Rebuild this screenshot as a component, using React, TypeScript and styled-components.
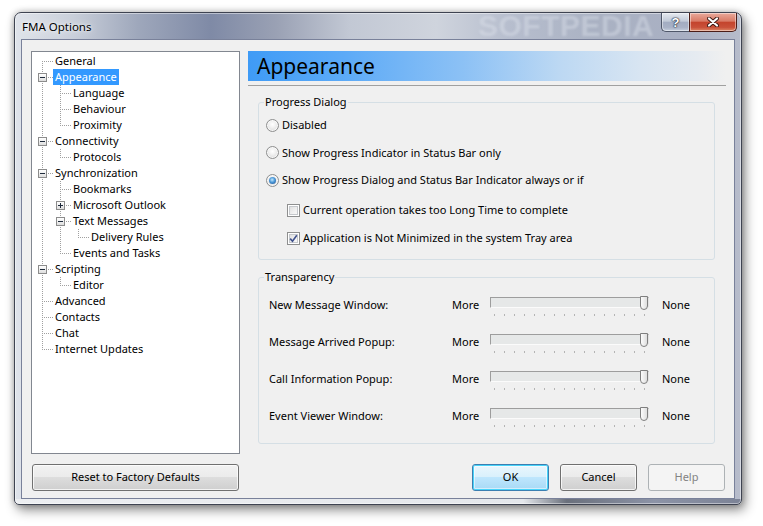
import React from "react";
import styled, { createGlobalStyle, css } from "styled-components";

const FONT = `"Noto Sans", "Segoe UI", sans-serif`;

const GlobalStyle = createGlobalStyle`
  html, body { margin: 0; padding: 0; background: #ffffff; }
  body { font-family: ${FONT}; font-size: 11px; color: #000; }
  * { box-sizing: border-box; }
`;

const Page = styled.div`
  width: 763px;
  height: 526px;
  overflow: hidden;
  padding: 12px 0 0 14px;
`;

const Window = styled.div`
  width: 728px;
  height: 493px;
  border: 1px solid #3e4351;
  border-radius: 7px 7px 5px 5px;
  padding: 0 6px 5px 6px;
  display: flex;
  flex-direction: column;
  background:
    linear-gradient(to right, #eceef1 0%, #e4e7eb 70%, #6a707c 76%, #8c93a6 88%, #7c8396 100%) bottom / 100% 5px no-repeat,
    linear-gradient(to right, #dfe3ea 0%, #c9cfda 8%, #9ea7bb 17%, #7f8aa6 27%, #9aa1b4 36%, #c2c8d4 46%, #cfd4dd 58%, #b7bece 68%, #aab2c3 80%, #a9b0c3 92%, #b7bccb 100%);
  box-shadow: inset 0 0 0 1px rgba(255, 255, 255, 0.45), 3px 5px 12px rgba(0, 0, 0, 0.45), 0 0 6px rgba(0, 0, 0, 0.25);
`;

const TitleBar = styled.div`
  height: 26px;
  flex: none;
  display: flex;
  align-items: flex-start;
  justify-content: space-between;
  position: relative;
`;

const Title = styled.span`
  padding-left: 1px;
  line-height: 27px;
  font-size: 11.5px;
  color: #000;
  text-shadow: 0 0 8px rgba(255, 255, 255, 0.9), 0 0 3px rgba(255, 255, 255, 0.9);
`;

const Watermark = styled.span`
  position: absolute;
  left: 457px;
  top: -4px;
  font-family: "Liberation Sans", sans-serif;
  font-weight: bold;
  font-size: 30px;
  letter-spacing: 0.5px;
  color: rgba(222, 227, 236, 0.42);
  filter: blur(0.8px);
  pointer-events: none;
`;

const CaptionGroup = styled.div`
  display: flex;
  margin-right: -2px;
  position: relative;
`;

const CaptionButton = styled.div<{ $close?: boolean }>`
  height: 19px;
  width: ${(p) => (p.$close ? 48 : 28)}px;
  display: flex;
  align-items: center;
  justify-content: center;
  border: 1px solid ${(p) => (p.$close ? "#4b1d17" : "#4f5769")};
  border-top: none;
  box-shadow: inset 0 0 0 1px rgba(255, 255, 255, 0.45);
  ${(p) =>
    p.$close
      ? css`
          border-radius: 0 0 5px 0;
          background: linear-gradient(#e9a99b 0%, #d97b67 45%, #c4442d 52%, #c9513a 80%, #de8a68 100%);
        `
      : css`
          border-right: none;
          border-radius: 0 0 0 5px;
          background: linear-gradient(#e6eaf0 0%, #c2cad8 45%, #a3adc2 52%, #a9b2c6 80%, #c6d0de 100%);
        `}
`;

const HelpGlyph = styled.span`
  font-family: "Liberation Sans", sans-serif;
  font-weight: bold;
  font-size: 13px;
  line-height: 1;
  color: #ffffff;
  text-shadow: 0 0 1px #1e2738, 0 0 1px #1e2738, 0 0 2px #1e2738;
`;

const Client = styled.div`
  flex: 1;
  border: 1px solid #79819a;
  background: #f0f0f0;
  display: grid;
  grid-template-columns: 209px 1fr;
  grid-template-rows: 403px 27px;
  column-gap: 8px;
  row-gap: 10px;
  padding: 11px 8px 7px 9px;
`;

/* ---------- Tree ---------- */

const Tree = styled.div`
  border: 1px solid #828790;
  background: #ffffff;
  padding: 1px 0 0 1px;
  display: flex;
  flex-direction: column;
`;

const TreeRow = styled.div`
  height: 16px;
  display: flex;
  align-items: stretch;
`;

type Guide = "pipe" | "blank" | "tee" | "elbow" | "first";

const dotV = css`
  content: "";
  position: absolute;
  left: 9px;
  width: 1px;
  background-image: linear-gradient(to bottom, #a0a0a0 50%, transparent 50%);
  background-size: 1px 2px;
`;
const dotH = css`
  content: "";
  position: absolute;
  top: 8px;
  left: 9px;
  right: -2px;
  height: 1px;
  background-image: linear-gradient(to right, #a0a0a0 50%, transparent 50%);
  background-size: 2px 1px;
`;

const GuideCell = styled.span<{ $kind: Guide }>`
  width: 18px;
  flex: none;
  position: relative;
  ${(p) =>
    p.$kind !== "blank" &&
    css`
      &::before {
        ${dotV};
        top: ${p.$kind === "first" ? "8px" : "0"};
        bottom: ${p.$kind === "elbow" ? "8px" : "0"};
      }
    `}
  ${(p) =>
    (p.$kind === "tee" || p.$kind === "elbow" || p.$kind === "first") &&
    css`
      &::after {
        ${dotH};
      }
    `}
`;

const Expander = styled.span<{ $plus?: boolean }>`
  position: absolute;
  left: 5px;
  top: 4px;
  width: 9px;
  height: 9px;
  border: 1px solid #8c8c8c;
  background: linear-gradient(#ffffff, #dedede);
  z-index: 1;
  &::before {
    content: "";
    position: absolute;
    left: 1px;
    top: 3px;
    width: 5px;
    height: 1px;
    background: #1f2b3c;
  }
  ${(p) =>
    p.$plus &&
    css`
      &::after {
        content: "";
        position: absolute;
        left: 3px;
        top: 1px;
        width: 1px;
        height: 5px;
        background: #1f2b3c;
      }
    `}
`;

const TreeLabel = styled.span<{ $selected?: boolean }>`
  margin-left: 2px;
  padding: 0 2px;
  line-height: 16px;
  white-space: nowrap;
  color: #000;
  ${(p) =>
    p.$selected &&
    css`
      background: #3399ff;
      color: #ffffff;
    `}
`;

/* ---------- Right side ---------- */

const RightPane = styled.div`
  display: flex;
  flex-direction: column;
`;

const Header = styled.div`
  height: 30px;
  flex: none;
  padding-left: 9px;
  font-size: 21px;
  line-height: 30px;
  color: #000;
  background: linear-gradient(to right, #3f9bf6 0%, #5caaf7 20%, #8cc1f5 45%, #bcd8f3 65%, #d8e5f2 82%, #e6ebf1 94%, #f0f0f0 100%);
`;

const Rule = styled.div`
  height: 1px;
  margin-top: 4px;
  background: #a0a0a0;
  flex: none;
`;

const Group = styled.fieldset<{ $top: number }>`
  margin: ${(p) => p.$top}px 11px 0 10px;
  padding: 0;
  border: 1px solid #d5dfe5;
  border-radius: 3px;
  min-width: 0;
`;

const Legend = styled.legend`
  margin-left: 5px;
  padding: 0 1px;
  line-height: 16px;
  font-size: 11px;
  color: #000;
`;

const GroupBody = styled.div<{ $pad: string }>`
  padding: ${(p) => p.$pad};
  display: flex;
  flex-direction: column;
`;

const OptionList = styled.div<{ $gap: number; $indent?: number; $top?: number }>`
  display: flex;
  flex-direction: column;
  gap: ${(p) => p.$gap}px;
  padding-left: ${(p) => p.$indent ?? 0}px;
  margin-top: ${(p) => p.$top ?? 0}px;
`;

const Option = styled.label`
  height: 16px;
  display: flex;
  align-items: center;
  gap: 3px;
  line-height: 16px;
  white-space: nowrap;
`;

const RadioMark = styled.span<{ $checked?: boolean }>`
  width: 13px;
  height: 13px;
  flex: none;
  border-radius: 50%;
  border: 1px solid #8e8f8f;
  position: relative;
  background: radial-gradient(circle at 50% 40%, #ffffff 0%, #f2f2f2 35%, #d2d2d2 100%);
  box-shadow: inset 0 0 0 1px rgba(255, 255, 255, 0.7);
  ${(p) =>
    p.$checked &&
    css`
      &::after {
        content: "";
        position: absolute;
        left: 2px;
        top: 2px;
        width: 7px;
        height: 7px;
        border-radius: 50%;
        background: radial-gradient(circle at 45% 40%, #c4e8fc 0%, #4b98d8 45%, #1b4a8a 100%);
      }
    `}
`;

const CheckMark = styled.span`
  width: 13px;
  height: 13px;
  flex: none;
  border: 1px solid #8e8f8f;
  background: linear-gradient(135deg, #d8d8d8 0%, #f2f2f2 60%, #fdfdfd 100%);
  box-shadow: inset 0 0 0 1px #ffffff, inset 0 0 0 2px #c5c8cc;
  display: flex;
  align-items: center;
  justify-content: center;
`;

const SliderList = styled.div`
  display: flex;
  flex-direction: column;
  gap: 17px;
`;

const SliderRow = styled.div`
  display: grid;
  grid-template-columns: 183px 38px 159px 1fr;
  height: 20px;
  align-items: start;
`;

const RowText = styled.span<{ $pad?: number }>`
  line-height: 16px;
  white-space: nowrap;
  padding-left: ${(p) => p.$pad ?? 0}px;
`;

const Slider = styled.div`
  position: relative;
  height: 20px;
  display: flex;
  flex-direction: column;
`;

const Track = styled.div`
  margin-top: 0px;
  height: 11px;
  border-style: solid;
  border-width: 1px;
  border-color: #9d9d9d #e2e2e2 #fbfbfb #9d9d9d;
  background: #e6e8e8;
`;

const Ticks = styled.div`
  margin-top: 6px;
  padding: 0 4px;
  display: flex;
  justify-content: space-between;
`;

const Tick = styled.span`
  width: 1px;
  height: 2px;
  background: #b4b4b4;
`;

const Thumb = styled.svg`
  position: absolute;
  left: 150px;
  top: -1px;
`;

/* ---------- Buttons ---------- */

const ButtonBar = styled.div`
  display: flex;
  justify-content: flex-end;
  gap: 11px;
  padding-right: 1px;
`;

type Variant = "normal" | "default" | "disabled";

const Button = styled.button<{ $variant?: Variant; $wide?: boolean }>`
  height: 27px;
  width: ${(p) => (p.$wide ? "auto" : "77px")};
  margin: ${(p) => (p.$wide ? "0 1px" : "0")};
  font-family: ${FONT};
  font-size: 11px;
  line-height: 24px;
  color: #000;
  border-radius: 3px;
  border: 1px solid #707070;
  padding: 0 0 1px 0;
  background: linear-gradient(#f2f2f2 0%, #ebebeb 49%, #dddddd 50%, #cfcfcf 100%);
  box-shadow: inset 0 0 0 1px rgba(255, 255, 255, 0.75);
  ${(p) =>
    p.$variant === "default" &&
    css`
      border-color: #3c7fb1;
      background: linear-gradient(#eaf6fd 0%, #d9f0fc 49%, #bee6fd 50%, #a7d9f5 100%);
      box-shadow: inset 0 0 0 1px #48d3f9, inset 0 0 0 2px rgba(255, 255, 255, 0.5);
    `}
  ${(p) =>
    p.$variant === "disabled" &&
    css`
      border-color: #adb2b5;
      background: #f4f4f4;
      color: #838383;
      box-shadow: none;
    `}
`;

/* ---------- Data ---------- */

interface TreeNode {
  label: string;
  guides: Guide[];
  expander?: "minus" | "plus";
  selected?: boolean;
}

const TREE: TreeNode[] = [
  { label: "General", guides: ["first"] },
  { label: "Appearance", guides: ["tee"], expander: "minus", selected: true },
  { label: "Language", guides: ["pipe", "tee"] },
  { label: "Behaviour", guides: ["pipe", "tee"] },
  { label: "Proximity", guides: ["pipe", "elbow"] },
  { label: "Connectivity", guides: ["tee"], expander: "minus" },
  { label: "Protocols", guides: ["pipe", "elbow"] },
  { label: "Synchronization", guides: ["tee"], expander: "minus" },
  { label: "Bookmarks", guides: ["pipe", "tee"] },
  { label: "Microsoft Outlook", guides: ["pipe", "tee"], expander: "plus" },
  { label: "Text Messages", guides: ["pipe", "tee"], expander: "minus" },
  { label: "Delivery Rules", guides: ["pipe", "pipe", "elbow"] },
  { label: "Events and Tasks", guides: ["pipe", "elbow"] },
  { label: "Scripting", guides: ["tee"], expander: "minus" },
  { label: "Editor", guides: ["pipe", "elbow"] },
  { label: "Advanced", guides: ["tee"] },
  { label: "Contacts", guides: ["tee"] },
  { label: "Chat", guides: ["tee"] },
  { label: "Internet Updates", guides: ["elbow"] },
];

const SLIDERS = ["New Message Window:", "Message Arrived Popup:", "Call Information Popup:", "Event Viewer Window:"];

const TICK_COUNT = 16;

function SliderControl() {
  return (
    <Slider>
      <Track />
      <Ticks>
        {Array.from({ length: TICK_COUNT }, (_, i) => (
          <Tick key={i} />
        ))}
      </Ticks>
      <Thumb width="9" height="15" viewBox="0 0 9 15">
        <defs>
          <linearGradient id="thumbFill" x1="0" y1="0" x2="1" y2="0">
            <stop offset="0" stopColor="#ffffff" />
            <stop offset="1" stopColor="#dcdcdc" />
          </linearGradient>
        </defs>
        <path d="M0.5 0.5 H7.5 V10 Q7.5 13.5 4 13.5 Q0.5 13.5 0.5 10 Z" fill="url(#thumbFill)" stroke="#7f7f7f" />
      </Thumb>
    </Slider>
  );
}

export default function App() {
  return (
    <>
      <GlobalStyle />
      <Page>
        <Window>
          <TitleBar>
            <Title>FMA Options</Title>
            <Watermark>SOFTPEDIA</Watermark>
            <CaptionGroup>
              <CaptionButton>
                <HelpGlyph>?</HelpGlyph>
              </CaptionButton>
              <CaptionButton $close>
                <svg width="12" height="10" viewBox="0 0 12 10">
                  <path d="M2 1.5 L10 8.5 M10 1.5 L2 8.5" stroke="#3a1712" strokeWidth="4" strokeLinecap="round" />
                  <path d="M2 1.5 L10 8.5 M10 1.5 L2 8.5" stroke="#ffffff" strokeWidth="2.2" strokeLinecap="round" />
                </svg>
              </CaptionButton>
            </CaptionGroup>
          </TitleBar>
          <Client>
            <Tree>
              {TREE.map((node) => (
                <TreeRow key={node.label}>
                  {node.guides.map((g, i) => (
                    <GuideCell key={i} $kind={g}>
                      {i === node.guides.length - 1 && node.expander && <Expander $plus={node.expander === "plus"} />}
                    </GuideCell>
                  ))}
                  <TreeLabel $selected={node.selected}>{node.label}</TreeLabel>
                </TreeRow>
              ))}
            </Tree>
            <RightPane>
              <Header>Appearance</Header>
              <Rule />
              <Group $top={8}>
                <Legend>Progress Dialog</Legend>
                <GroupBody $pad="7px 0 13px 7px">
                  <OptionList $gap={11.5}>
                    <Option>
                      <RadioMark />
                      Disabled
                    </Option>
                    <Option>
                      <RadioMark />
                      Show Progress Indicator in Status Bar only
                    </Option>
                    <Option>
                      <RadioMark $checked />
                      Show Progress Dialog and Status Bar Indicator always or if
                    </Option>
                  </OptionList>
                  <OptionList $gap={12} $indent={21} $top={14}>
                    <Option>
                      <CheckMark />
                      Current operation takes too Long Time to complete
                    </Option>
                    <Option>
                      <CheckMark>
                        <svg width="9" height="9" viewBox="0 0 9 9">
                          <path d="M1.2 4.6 L3.5 7.2 L7.8 1.2" fill="none" stroke="#3f518c" strokeWidth="1.6" />
                        </svg>
                      </CheckMark>
                      Application is Not Minimized in the system Tray area
                    </Option>
                  </OptionList>
                </GroupBody>
              </Group>
              <Group $top={9}>
                <Legend>Transparency</Legend>
                <GroupBody $pad="12px 0 15px 10px">
                  <SliderList>
                    {SLIDERS.map((s) => (
                      <SliderRow key={s}>
                        <RowText>{s}</RowText>
                        <RowText>More</RowText>
                        <SliderControl />
                        <RowText $pad={13}>None</RowText>
                      </SliderRow>
                    ))}
                  </SliderList>
                </GroupBody>
              </Group>
            </RightPane>
            <Button $wide>Reset to Factory Defaults</Button>
            <ButtonBar>
              <Button $variant="default">OK</Button>
              <Button>Cancel</Button>
              <Button $variant="disabled">Help</Button>
            </ButtonBar>
          </Client>
        </Window>
      </Page>
    </>
  );
}
